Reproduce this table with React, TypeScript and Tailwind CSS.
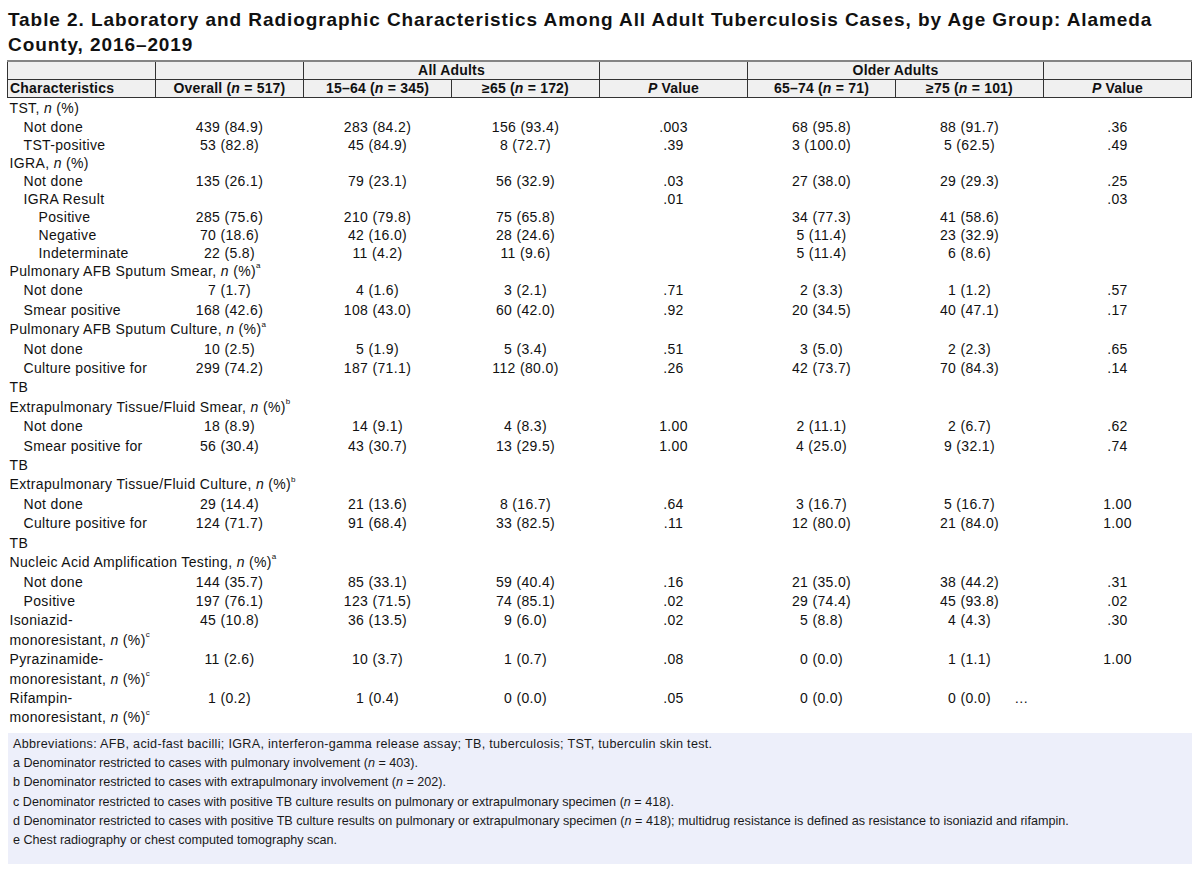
import type { ReactNode } from 'react';

type Row = {
  label: ReactNode;
  level?: 0 | 1 | 2;
  vals?: string[];
  lead: 'first' | 'std';
};

const N = () => <i>n</i>;
const Sup = ({ c }: { c: string }) => (
  <sup className="text-[8px] relative -top-[2px] align-super leading-none">{c}</sup>
);
const NPct = ({ s }: { s?: string }) => (
  <>
    , <N /> (%){s ? <Sup c={s} /> : null}
  </>
);

const rows: Row[] = [
  { label: <>TST<NPct /></>, lead: 'first' },
  { label: 'Not done', level: 1, vals: ['439 (84.9)', '283 (84.2)', '156 (93.4)', '.003', '68 (95.8)', '88 (91.7)', '.36'], lead: 'first' },
  { label: 'TST-positive', level: 1, vals: ['53 (82.8)', '45 (84.9)', '8 (72.7)', '.39', '3 (100.0)', '5 (62.5)', '.49'], lead: 'first' },
  { label: <>IGRA<NPct /></>, lead: 'first' },
  { label: 'Not done', level: 1, vals: ['135 (26.1)', '79 (23.1)', '56 (32.9)', '.03', '27 (38.0)', '29 (29.3)', '.25'], lead: 'first' },
  { label: 'IGRA Result', level: 1, vals: ['', '', '', '.01', '', '', '.03'], lead: 'first' },
  { label: 'Positive', level: 2, vals: ['285 (75.6)', '210 (79.8)', '75 (65.8)', '', '34 (77.3)', '41 (58.6)', ''], lead: 'first' },
  { label: 'Negative', level: 2, vals: ['70 (18.6)', '42 (16.0)', '28 (24.6)', '', '5 (11.4)', '23 (32.9)', ''], lead: 'first' },
  { label: 'Indeterminate', level: 2, vals: ['22 (5.8)', '11 (4.2)', '11 (9.6)', '', '5 (11.4)', '6 (8.6)', ''], lead: 'first' },
  { label: <>Pulmonary AFB Sputum Smear<NPct s="a" /></>, lead: 'std' },
  { label: 'Not done', level: 1, vals: ['7 (1.7)', '4 (1.6)', '3 (2.1)', '.71', '2 (3.3)', '1 (1.2)', '.57'], lead: 'std' },
  { label: 'Smear positive', level: 1, vals: ['168 (42.6)', '108 (43.0)', '60 (42.0)', '.92', '20 (34.5)', '40 (47.1)', '.17'], lead: 'std' },
  { label: <>Pulmonary AFB Sputum Culture<NPct s="a" /></>, lead: 'std' },
  { label: 'Not done', level: 1, vals: ['10 (2.5)', '5 (1.9)', '5 (3.4)', '.51', '3 (5.0)', '2 (2.3)', '.65'], lead: 'std' },
  { label: <>Culture positive for<br />TB</>, level: 1, vals: ['299 (74.2)', '187 (71.1)', '112 (80.0)', '.26', '42 (73.7)', '70 (84.3)', '.14'], lead: 'std' },
  { label: <>Extrapulmonary Tissue/Fluid Smear<NPct s="b" /></>, lead: 'std' },
  { label: 'Not done', level: 1, vals: ['18 (8.9)', '14 (9.1)', '4 (8.3)', '1.00', '2 (11.1)', '2 (6.7)', '.62'], lead: 'std' },
  { label: <>Smear positive for<br />TB</>, level: 1, vals: ['56 (30.4)', '43 (30.7)', '13 (29.5)', '1.00', '4 (25.0)', '9 (32.1)', '.74'], lead: 'std' },
  { label: <>Extrapulmonary Tissue/Fluid Culture<NPct s="b" /></>, lead: 'std' },
  { label: 'Not done', level: 1, vals: ['29 (14.4)', '21 (13.6)', '8 (16.7)', '.64', '3 (16.7)', '5 (16.7)', '1.00'], lead: 'std' },
  { label: <>Culture positive for<br />TB</>, level: 1, vals: ['124 (71.7)', '91 (68.4)', '33 (82.5)', '.11', '12 (80.0)', '21 (84.0)', '1.00'], lead: 'std' },
  { label: <>Nucleic Acid Amplification Testing<NPct s="a" /></>, lead: 'std' },
  { label: 'Not done', level: 1, vals: ['144 (35.7)', '85 (33.1)', '59 (40.4)', '.16', '21 (35.0)', '38 (44.2)', '.31'], lead: 'std' },
  { label: 'Positive', level: 1, vals: ['197 (76.1)', '123 (71.5)', '74 (85.1)', '.02', '29 (74.4)', '45 (93.8)', '.02'], lead: 'std' },
  { label: <>Isoniazid-<br />monoresistant<NPct s="c" /></>, vals: ['45 (10.8)', '36 (13.5)', '9 (6.0)', '.02', '5 (8.8)', '4 (4.3)', '.30'], lead: 'std' },
  { label: <>Pyrazinamide-<br />monoresistant<NPct s="c" /></>, vals: ['11 (2.6)', '10 (3.7)', '1 (0.7)', '.08', '0 (0.0)', '1 (1.1)', '1.00'], lead: 'std' },
  { label: <>Rifampin-<br />monoresistant<NPct s="c" /></>, vals: ['1 (0.2)', '1 (0.4)', '0 (0.0)', '.05', '0 (0.0)', '0 (0.0)', '…'], lead: 'std' },
];

const notes: ReactNode[] = [
  <span className="tracking-[0.3px]">Abbreviations: AFB, acid-fast bacilli; IGRA, interferon-gamma release assay; TB, tuberculosis; TST, tuberculin skin test.</span>,
  <>a Denominator restricted to cases with pulmonary involvement (<N /> = 403).</>,
  <>b Denominator restricted to cases with extrapulmonary involvement (<N /> = 202).</>,
  <>c Denominator restricted to cases with positive TB culture results on pulmonary or extrapulmonary specimen (<N /> = 418).</>,
  <>d Denominator restricted to cases with positive TB culture results on pulmonary or extrapulmonary specimen (<N /> = 418); multidrug resistance is defined as resistance to isoniazid and rifampin.</>,
  'e Chest radiography or chest computed tomography scan.',
];

export default function App() {
  const th = 'border border-[#333] bg-[#f0f0f0] font-bold text-center h-[18px] leading-[17px] p-0 tracking-[0.2px]';
  return (
    <div className="bg-white w-[1200px] h-[873px] overflow-hidden text-[#111] font-['Liberation_Sans',Arial,sans-serif]">
      <h1 className="pt-[7px] pl-[8px] text-[19px] font-bold leading-[25px] tracking-[0.92px] whitespace-nowrap">
        Table 2. Laboratory and Radiographic Characteristics Among All Adult Tuberculosis Cases, by Age Group: Alameda
        <br />
        County, 2016–2019
      </h1>
      <div className="pl-[7px] pr-[8px] mt-[3px]">
        <table className="w-full table-fixed border-collapse text-[14px]">
          <thead>
            <tr className="border-t-2 border-t-[#858585]">
              <th className={th} />
              <th className={th} />
              <th className={th} colSpan={2}>All Adults</th>
              <th className={th} />
              <th className={th} colSpan={2}>Older Adults</th>
              <th className={th} />
            </tr>
            <tr>
              <th className={`${th} !text-left pl-[2px]`}>Characteristics</th>
              <th className={th}>Overall (<N /> = 517)</th>
              <th className={th}>15–64 (<N /> = 345)</th>
              <th className={th}>≥65 (<N /> = 172)</th>
              <th className={th}><i>P</i> Value</th>
              <th className={th}>65–74 (<N /> = 71)</th>
              <th className={th}>≥75 (<N /> = 101)</th>
              <th className={th}><i>P</i> Value</th>
            </tr>
          </thead>
          <tbody className="tracking-[0.35px]">
            {rows.map((r, i) => {
              const lead = i === 0 ? 'leading-[20px]' : r.lead === 'first' ? 'leading-[18px]' : 'leading-[19.4px]';
              const indent = r.level === 2 ? 'indent-[29px]' : r.level === 1 ? 'indent-[14px]' : 'indent-0';
              if (!r.vals) {
                return (
                  <tr key={i}>
                    <td colSpan={8} className={`p-0 pl-[2px] text-left align-top whitespace-nowrap ${lead}`}>{r.label}</td>
                  </tr>
                );
              }
              return (
                <tr key={i}>
                  <td className={`p-0 pl-[2px] text-left align-top ${lead} ${indent}`}>{r.label}</td>
                  {r.vals.map((v, j) => (
                    <td key={j} className={`p-0 text-center align-top ${lead}`}>
                      {v === '…' ? <span className="inline-block -translate-x-[96px]">…</span> : v}
                    </td>
                  ))}
                </tr>
              );
            })}
          </tbody>
        </table>
        <div className="mt-[5px] ml-[1px] bg-[#edeffa] pt-[2px] pb-[13px] pl-[5px] text-[12.6px] leading-[19.3px] text-[#1a1a1a]">
          {notes.map((n, i) => (
            <div key={i}>{n}</div>
          ))}
        </div>
      </div>
    </div>
  );
}
